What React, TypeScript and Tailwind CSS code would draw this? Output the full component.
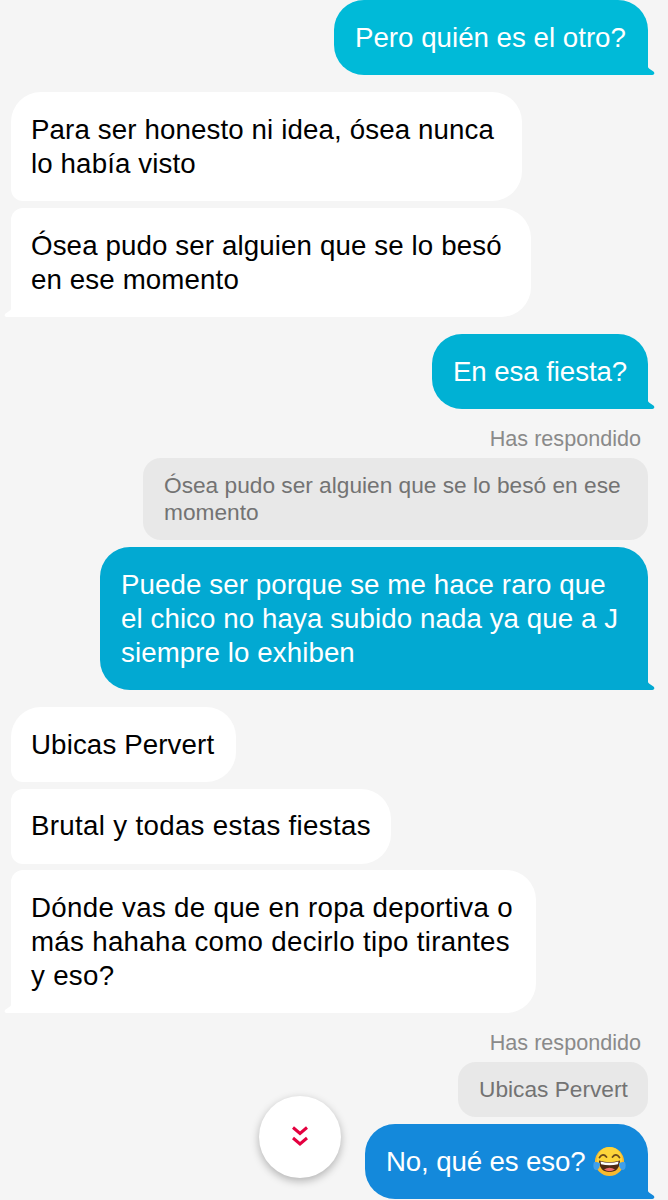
import type { ReactNode } from "react";

function Tail({ side, color }: { side: "left" | "right"; color: string }) {
  return (
    <svg
      width="8"
      height="13"
      viewBox="0 0 8 13"
      className={side === "right" ? "absolute bottom-0 right-[-7px]" : "absolute bottom-0 left-[-7px] -scale-x-100"}
    >
      <path d="M0 0 C0 3 0.5 5 2 6.6 L6.4 9.6 C8 11 7.4 13 5.4 13 L0 13 Z" fill={color} />
    </svg>
  );
}

function Sent({ children, bg, hex, width }: { children: ReactNode; bg: string; hex: string; width: string }) {
  return (
    <div className={`relative self-end mr-5 rounded-t-[30px] rounded-bl-[30px] pl-[21px] py-[20.5px] whitespace-nowrap text-white ${bg} ${width}`}>
      {children}
      <Tail side="right" color={hex} />
    </div>
  );
}

function Received({ children, width, shape, tail }: { children: ReactNode; width: string; shape: string; tail?: boolean }) {
  return (
    <div className={`relative ml-[11px] bg-white pl-5 py-[20.5px] whitespace-nowrap text-black ${shape} ${width}`}>
      {children}
      {tail && <Tail side="left" color="#ffffff" />}
    </div>
  );
}

function Quote({ children, width, height }: { children: ReactNode; width: string; height: string }) {
  return (
    <div className={`self-end mr-5 rounded-[18px] bg-[#e8e8e8] pl-[21px] pt-[14px] whitespace-nowrap text-[22.7px] leading-[27px] text-[#737373] ${width} ${height}`}>
      {children}
    </div>
  );
}

function LaughEmoji() {
  return (
    <svg width="33" height="31" viewBox="0 0 33 31" className="inline-block align-[-6px]">
      <circle cx="16.5" cy="15.5" r="14.5" fill="#f9b92e" />
      <circle cx="16.5" cy="13.5" r="12.5" fill="#fdd53a" />
      <path d="M6.5 11.5 Q10 6.5 13.5 11" fill="none" stroke="#6b4a1b" strokeWidth="1.8" strokeLinecap="round" />
      <path d="M19.5 11 Q23 6.5 26.5 11.5" fill="none" stroke="#6b4a1b" strokeWidth="1.8" strokeLinecap="round" />
      <path d="M6 14.5 Q16.5 18 27 14.5 Q26.5 26 16.5 26 Q6.5 26 6 14.5 Z" fill="#4e2a14" />
      <path d="M7.5 15.4 Q16.5 18 25.5 15.4 L25 18.2 Q16.5 20.2 8 18.2 Z" fill="#ffffff" />
      <path d="M11 23.4 Q16.5 20 22 23.4 Q16.5 27 11 23.4 Z" fill="#ef6c6c" />
      <path d="M1 16 C3.5 16 6 16.5 7 17.4 C7 21.5 5 24 2.8 24 C0.5 24 -0.4 19.5 1 16 Z" fill="#3f9fea" />
      <path d="M32 16 C29.5 16 27 16.5 26 17.4 C26 21.5 28 24 30.2 24 C32.5 24 33.4 19.5 32 16 Z" fill="#3f9fea" />
    </svg>
  );
}

function ChevronsDown() {
  return (
    <svg width="18" height="22" viewBox="0 0 18 22" fill="none" stroke="#e4003f" strokeWidth="3">
      <path d="M2 1.5 L9 7.5 L16 1.5" />
      <path d="M2 12 L9 18 L16 12" />
    </svg>
  );
}

export default function App() {
  return (
    <div className="relative flex h-[1200px] w-full flex-col overflow-hidden bg-[#f5f5f5] font-['Liberation_Sans',Arial,sans-serif] text-[27.7px] leading-[34px]">
      <Sent bg="bg-[#00bad8]" hex="#00bad8" width="w-[314px]">Pero quién es el otro?</Sent>

      <div className="mt-[17px] flex flex-col gap-[7px] tracking-[0.12px]">
        <Received width="w-[511px]" shape="rounded-r-[30px] rounded-tl-[30px] rounded-bl-[12px]">
          Para ser honesto ni idea, ósea nunca<br />lo había visto
        </Received>
        <Received width="w-[520px]" shape="rounded-r-[30px] rounded-tl-[12px]" tail>
          Ósea pudo ser alguien que se lo besó<br />en ese momento
        </Received>
      </div>

      <div className="mt-[17px] flex flex-col">
        <Sent bg="bg-[#00b1d4]" hex="#00b1d4" width="w-[216px]"><span className="tracking-[-0.1px]">En esa fiesta?</span></Sent>
        <div className="mr-[27px] mt-[17px] self-end text-[21.6px] leading-[26px] text-[#8a8a8a]">Has respondido</div>
        <div className="mt-[6px] flex flex-col gap-[7px]">
          <Quote width="w-[505px]" height="h-[82px]">
            Ósea pudo ser alguien que se lo besó en ese<br />momento
          </Quote>
          <Sent bg="bg-[#02a9d2]" hex="#02a9d2" width="w-[548px]">
            <span className="tracking-[0.08px]">
              Puede ser porque se me hace raro que<br />el chico no haya subido nada ya que a J<br />siempre lo exhiben
            </span>
          </Sent>
        </div>
      </div>

      <div className="mt-[17px] flex flex-col gap-[6.5px]">
        <Received width="w-[225px]" shape="rounded-r-[30px] rounded-tl-[30px] rounded-bl-[12px]"><span className="tracking-[0.12px]">Ubicas Pervert</span></Received>
        <Received width="w-[380px]" shape="rounded-r-[30px] rounded-l-[12px]"><span className="tracking-[0.32px]">Brutal y todas estas fiestas</span></Received>
        <Received width="w-[525px]" shape="rounded-r-[30px] rounded-tl-[12px]" tail>
          <span className="tracking-[0.3px]">
            Dónde vas de que en ropa deportiva o<br />más hahaha como decirlo tipo tirantes<br />y eso?
          </span>
        </Received>
      </div>

      <div className="mr-[27px] mt-[17px] self-end text-[21.6px] leading-[26px] text-[#8a8a8a]">Has respondido</div>
      <div className="mt-[6px] flex flex-col gap-[7px]">
        <Quote width="w-[190px]" height="h-[55px]">Ubicas Pervert</Quote>
        <Sent bg="bg-[#1489db]" hex="#1489db" width="w-[283px]">
          <span className="tracking-[-0.15px]">No, qué es eso?</span> <LaughEmoji />
        </Sent>
      </div>

      <button className="absolute left-[259px] top-[1096px] flex h-[82px] w-[82px] items-center justify-center rounded-full bg-white shadow-[0_3px_8px_rgba(0,0,0,0.28)]">
        <ChevronsDown />
      </button>
    </div>
  );
}
